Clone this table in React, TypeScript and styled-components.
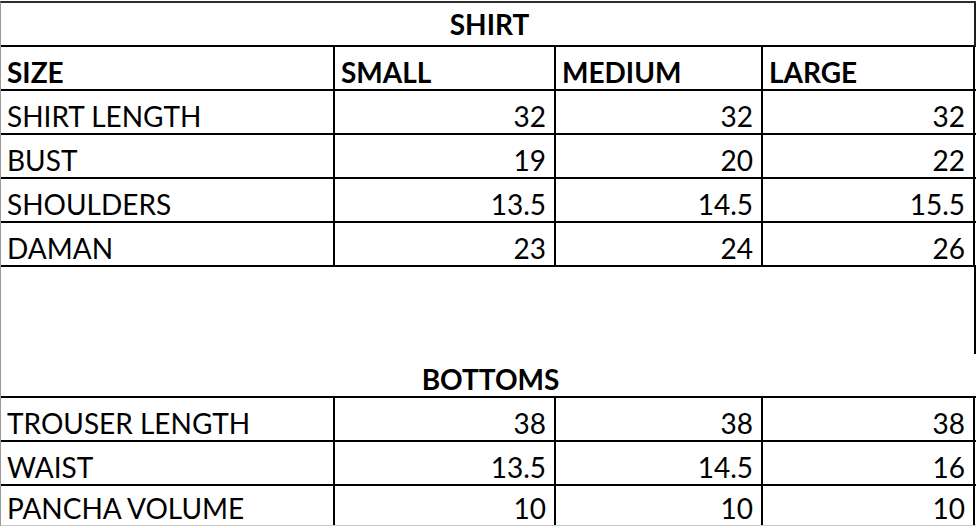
import React from 'react'
import styled, { createGlobalStyle } from 'styled-components'

const GlobalStyle = createGlobalStyle`
  html, body {
    margin: 0;
    padding: 0;
    background: #fff;
  }
  body {
    font-family: Lato, "Liberation Sans", sans-serif;
    color: #000;
  }
`

const COLS = '334px 221px 207px 212px'

type Measure = { label: string; values: string[] }

const shirt: Measure[] = [
  { label: 'SHIRT LENGTH', values: ['32', '32', '32'] },
  { label: 'BUST', values: ['19', '20', '22'] },
  { label: 'SHOULDERS', values: ['13.5', '14.5', '15.5'] },
  { label: 'DAMAN', values: ['23', '24', '26'] },
]

const bottoms: Measure[] = [
  { label: 'TROUSER LENGTH', values: ['38', '38', '38'] },
  { label: 'WAIST', values: ['13.5', '14.5', '16'] },
  { label: 'PANCHA VOLUME', values: ['10', '10', '10'] },
]

const Sheet = styled.div`
  width: 975px;
  margin-top: 1px;
  border-left: 1px solid #9a9a9a;
  border-top: 2px solid #2e2e2e;
  display: flex;
  flex-direction: column;
`

const Title = styled.div<{ $open?: boolean; $center?: boolean }>`
  height: 44px;
  box-sizing: border-box;
  display: flex;
  justify-content: center;
  align-items: ${p => (p.$center ? 'center' : 'flex-end')};
  padding-bottom: ${p => (p.$center ? '0' : '3px')};
  border-bottom: 2px solid #000;
  border-right: ${p => (p.$open ? '0' : '2px solid #1e1e1e')};
  font-weight: 700;
  font-size: 28px;
  line-height: 1;
  padding-left: 4px;
`

const Row = styled.div<{ $last?: boolean }>`
  display: grid;
  grid-template-columns: ${COLS};
  height: ${p => (p.$last ? '39px' : '42px')};
  border-bottom: 2px solid ${p => (p.$last ? '#c8c8c8' : '#000')};
  ${p => p.$last && 'border-bottom-width: 1px;'}
`

const Cell = styled.div<{ $num?: boolean; $bold?: boolean }>`
  box-sizing: border-box;
  border-right: 2px solid #000;
  display: flex;
  align-items: flex-end;
  justify-content: ${p => (p.$num ? 'flex-end' : 'flex-start')};
  padding: 0 8px 3px 6px;
  font-size: 28px;
  line-height: 1;
  font-weight: ${p => (p.$bold ? 700 : 400)};
  white-space: nowrap;
`

const Spacer = styled.div`
  height: 87px;
  border-right: 2px solid #000;
`

const MeasureRows = ({ rows, lastIsEnd }: { rows: Measure[]; lastIsEnd?: boolean }) => (
  <>
    {rows.map((r, i) => (
      <Row key={r.label} $last={lastIsEnd && i === rows.length - 1}>
        <Cell>{r.label}</Cell>
        {r.values.map((v, j) => (
          <Cell key={j} $num>{v}</Cell>
        ))}
      </Row>
    ))}
  </>
)

export default function App() {
  return (
    <>
      <GlobalStyle />
      <Sheet>
        <Title $center>SHIRT</Title>
        <Row>
          <Cell $bold>SIZE</Cell>
          <Cell $bold>SMALL</Cell>
          <Cell $bold>MEDIUM</Cell>
          <Cell $bold>LARGE</Cell>
        </Row>
        <MeasureRows rows={shirt} />
        <Spacer />
        <Title $open>BOTTOMS</Title>
        <MeasureRows rows={bottoms} lastIsEnd />
      </Sheet>
    </>
  )
}
